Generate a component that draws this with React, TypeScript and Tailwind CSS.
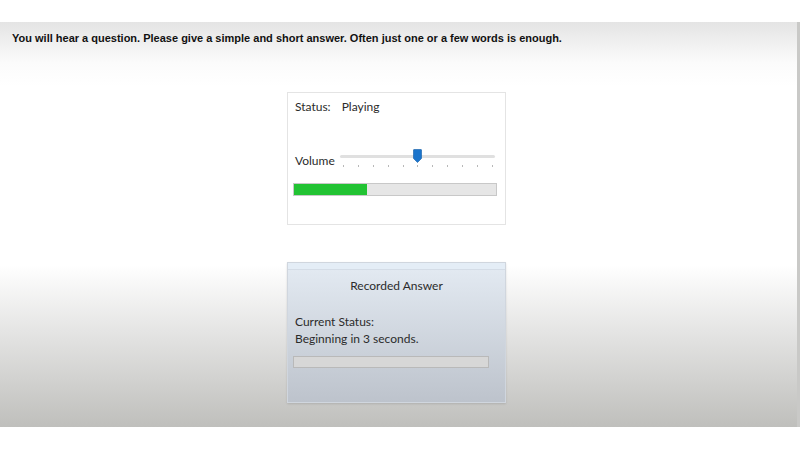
import React from 'react';

const ticks = Array.from({ length: 11 }, (_, i) => i);

function VolumeSlider() {
  return (
    <div className="relative h-[20px] flex-1">
      <div className="absolute left-0 right-0 top-[4px] h-[3px] rounded bg-[#e0e0e0]" />
      <div className="absolute left-[3px] right-[2px] top-[14px] flex justify-between">
        {ticks.map((t) => (
          <span key={t} className="block h-[2px] w-[1px] bg-[#b8b8b8]" />
        ))}
      </div>
      {/* thumb */}
      <svg className="absolute left-[73px] top-[-2px]" width="9" height="14" viewBox="0 0 9 14">
        <path d="M1 0.5 H8 a0.5 0.5 0 0 1 0.5 0.5 V9.5 L4.5 13.5 L0.5 9.5 V1 a0.5 0.5 0 0 1 0.5 -0.5 Z" fill="#1a74cc" stroke="#0f5aa6" strokeWidth="0.6" />
      </svg>
    </div>
  );
}

export default function App() {
  return (
    <div className="flex h-[450px] w-[800px] flex-col bg-white">
      <div className="h-[22px] shrink-0" />
      <div className="flex h-[405px] shrink-0 flex-col border-r-[3px] border-[#c9c9c7] bg-[linear-gradient(to_bottom,#e4e4e4_0%,#fbfbfb_10%,#ffffff_16%,#ffffff_60%,#e2e2e1_78%,#bfbfbc_100%)]">
        <p className="pl-[12px] pt-[10px] font-['Liberation_Sans',Arial,sans-serif] text-[11px] font-bold leading-[13px] text-[#111]">
          You will hear a question. Please give a simple and short answer. Often just one or a few words is enough.
        </p>

        <div className="ml-[287px] mt-[47px] flex w-[219px] flex-col font-['Lato',sans-serif] text-[12px] text-[#2b2b2b]">
          {/* player panel */}
          <div className="h-[133px] border border-[#e4e4e4] bg-white px-[5px]">
            <div className="mt-[6px] flex gap-[11px] pl-[2px] leading-[16px]">
              <span>Status:</span>
              <span>Playing</span>
            </div>
            <div className="mt-[35px] flex items-start pl-[2px]">
              <span className="mt-[3px] w-[45px] shrink-0 leading-[16px]">Volume</span>
              <div className="mr-[5px] flex flex-1 pt-[1px]">
                <VolumeSlider />
              </div>
            </div>
            <div className="mr-[3px] mt-[12px] h-[13px] border border-[#c8c8c8] bg-[#e6e6e6]">
              <div className="h-full w-[73px] bg-[#22c333]" />
            </div>
          </div>

          {/* recorder panel */}
          <div className="mt-[37px] flex h-[141px] flex-col border border-[#d0d6de] shadow-[0_1px_2px_rgba(0,0,0,0.12)]">
            <div className="h-[7px] border-b border-[#d4dce6] bg-[#e4edf6]" />
            <div className="flex flex-1 flex-col bg-[linear-gradient(to_bottom,#e2e9f1,#bdc3cc)] px-[5px]">
              <div className="mt-[8px] text-center leading-[16px]">Recorded Answer</div>
              <div className="mt-[19px] pl-[2px] leading-[17px]">Current Status:</div>
              <div className="pl-[2px] leading-[17px]">Beginning in 3 seconds.</div>
              <div className="mr-[11px] mt-[9px] h-[12px] border border-[#b9b9b9] bg-[#d7d7d7]" />
            </div>
          </div>
        </div>
      </div>
    </div>
  );
}
